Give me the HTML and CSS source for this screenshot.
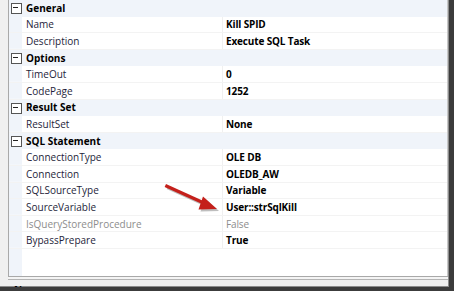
FILE: index.html
```html
<!DOCTYPE html>
<html>
<head>
<meta charset="utf-8">
<link rel="stylesheet" href="styles.css">
</head>
<body>
<div class="window">
  <div class="frame">
    <div class="grid">
      <div class="row cat"><span class="box"></span><span class="label">General</span></div>
      <div class="row"><span class="label">Name</span><span class="value">Kill SPID</span></div>
      <div class="row"><span class="label">Description</span><span class="value">Execute SQL Task</span></div>
      <div class="row cat"><span class="box"></span><span class="label">Options</span></div>
      <div class="row"><span class="label">TimeOut</span><span class="value">0</span></div>
      <div class="row"><span class="label">CodePage</span><span class="value">1252</span></div>
      <div class="row cat"><span class="box"></span><span class="label">Result Set</span></div>
      <div class="row"><span class="label">ResultSet</span><span class="value">None</span></div>
      <div class="row cat"><span class="box"></span><span class="label">SQL Statement</span></div>
      <div class="row"><span class="label">ConnectionType</span><span class="value">OLE DB</span></div>
      <div class="row"><span class="label">Connection</span><span class="value">OLEDB_AW</span></div>
      <div class="row"><span class="label">SQLSourceType</span><span class="value">Variable</span></div>
      <div class="row"><span class="label">SourceVariable</span><span class="value">User::strSqlKill</span></div>
      <div class="row disabled"><span class="label">IsQueryStoredProcedure</span><span class="value">False</span></div>
      <div class="row"><span class="label">BypassPrepare</span><span class="value">True</span></div>
      <div class="filler"></div>
    </div>
    <div class="splitter"></div>
    <div class="desc"><span class="desc-title">Name</span></div>
  </div>
  <svg class="arrow" width="80" height="50" viewBox="0 0 80 50">
    <g transform="translate(2,2)" fill="#8a8a8a" opacity="0.55">
      <path d="M3 6 L46 25.5 L44.6 28.6 L1.6 9.1 Z"/>
      <path d="M40 18.5 L54 31 L35.5 31.5 Z"/>
    </g>
    <g fill="#c4201b">
      <path d="M3 6 L46 25.5 L44.6 28.6 L1.6 9.1 Z"/>
      <path d="M40 18.5 L54 31 L35.5 31.5 Z"/>
    </g>
  </svg>
</div>
</body>
</html>
```
FILE: styles.css
```css
* { box-sizing: border-box; }
html, body { margin: 0; padding: 0; }
body {
  width: 454px;
  height: 291px;
  overflow: hidden;
  background: #fff;
  font-family: "Open Sans", "Noto Sans", sans-serif;
  font-size: 10px;
}
.window {
  position: relative;
  width: 454px;
  height: 291px;
  background: #f0f0f0;
  border-right: 5px solid #3c3c3c;
  border-bottom: 4px solid #3c3c3c;
  box-shadow: inset -1px -1px 0 #8c8c8c;
  overflow: hidden;
}
.frame {
  display: flex;
  flex-direction: column;
  height: 100%;
  padding-left: 8px;
  padding-right: 1px;
}
.grid {
  flex: 0 0 276px;
  background: #fff;
  border-left: 1px solid #a9a9a9;
  border-right: 1px solid #c8c8c8;
  display: flex;
  flex-direction: column;
  overflow: hidden;
}
.row {
  flex: 0 0 16.6px;
  display: flex;
  align-items: center;
  padding-left: 13px;
  background: linear-gradient(#f0f4fa, #f0f4fa) left / 13px 100% no-repeat, #fff;
  border-bottom: 1px solid #f3f3f3;
  color: #1e1e3a;
  position: relative;
}
.row .label {
  width: 201px;
  padding-left: 4px;
  height: 100%;
  display: flex;
  align-items: center;
  border-right: 1px solid #f0f0f0;
  white-space: nowrap;
}
.row .value {
  padding-left: 3px;
  font-weight: 700;
  color: #000;
  white-space: nowrap;
  letter-spacing: -0.15px;
}
.row.disabled .label,
.row.disabled .value {
  color: #8d8d8d;
  font-weight: 400;
}
.row.cat {
  background: #f0f4fa;
  border-bottom-color: #f0f4fa;
  padding-left: 0;
}
.row.cat .label {
  border-right: none;
  font-weight: 700;
  color: #000;
  padding-left: 4px;
}
.box {
  flex: 0 0 13px;
  height: 13px;
  position: relative;
}
.box::before {
  content: "";
  position: absolute;
  left: 2px;
  top: 2px;
  width: 9px;
  height: 9px;
  border: 1px solid #555;
  background: #fff;
}
.box::after {
  content: "";
  position: absolute;
  left: 4px;
  top: 6px;
  width: 5px;
  height: 1px;
  background: #222;
}
.filler {
  flex: 1;
  background: linear-gradient(#f0f4fa, #f0f4fa) left / 13px 100% no-repeat, #fff;
}
.splitter {
  flex: 0 0 4px;
  border-top: 1px solid #a9a9a9;
  border-bottom: 1px solid #b4b4b4;
  background: #f4f4f4;
}
.desc {
  flex: 1;
  padding: 3px 0 0 6px;
  overflow: hidden;
}
.desc-title {
  font-weight: 700;
  color: #000;
}
.arrow {
  position: absolute;
  left: 163px;
  top: 178px;
}
```
